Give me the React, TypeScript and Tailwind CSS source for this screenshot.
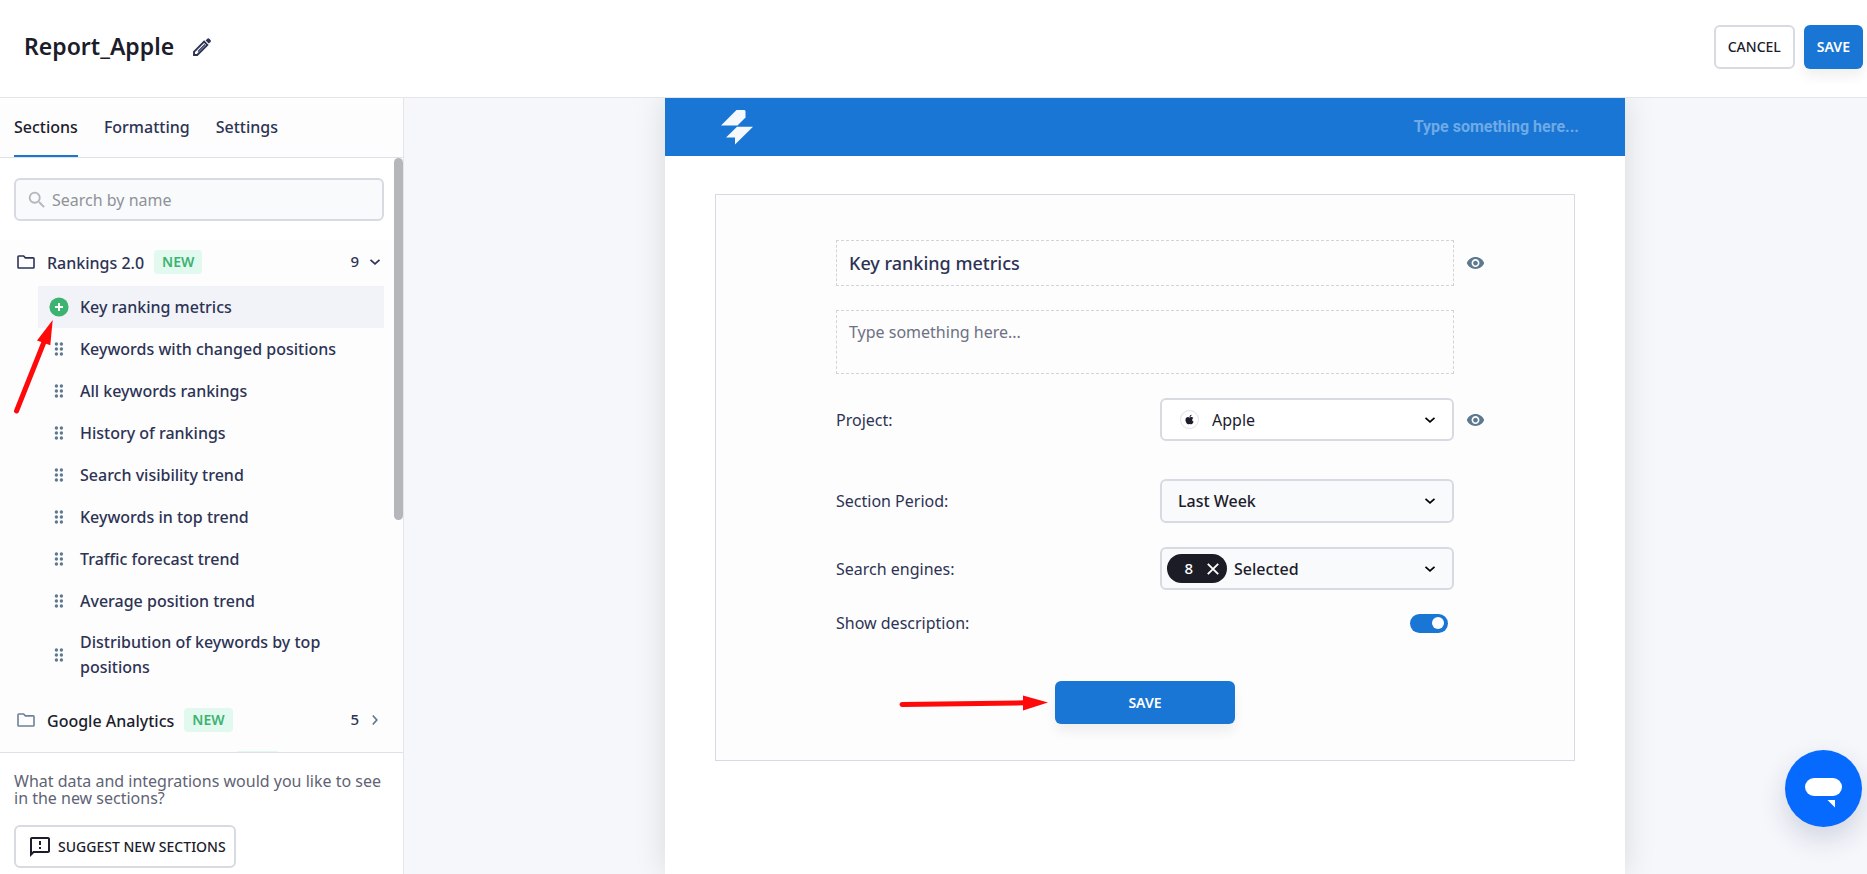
import { useState } from "react";
import type { ReactNode } from "react";
import { MdOutlineFeedback, MdSearch, MdVisibility } from "react-icons/md";
import { FaApple } from "react-icons/fa";

const sections = [
  "Key ranking metrics",
  "Keywords with changed positions",
  "All keywords rankings",
  "History of rankings",
  "Search visibility trend",
  "Keywords in top trend",
  "Traffic forecast trend",
  "Average position trend",
  "Distribution of keywords by top positions",
];

const tabs = ["Sections", "Formatting", "Settings"];

function Chevron({ className = "" }: { className?: string }) {
  return (
    <svg viewBox="0 0 12 12" className={`size-3 ${className}`} fill="none" stroke="currentColor" strokeWidth="1.7" aria-hidden="true">
      <path d="M1.5 3.8 6 7.8 10.5 3.8" />
    </svg>
  );
}

function Pencil() {
  return (
    <svg viewBox="0 0 20 20" className="size-5" aria-hidden="true">
      <path d="M2 18v-3.2L12.1 4.7l3.2 3.2L5.2 18Z" fill="none" stroke="currentColor" strokeWidth="1.9" />
      <path d="M6 14.5 13 7.5" stroke="currentColor" strokeWidth="1.1" />
      <path d="M13.6 3.4 15.3 1.7a1.4 1.4 0 0 1 2 0l1.2 1.2a1.4 1.4 0 0 1 0 2L16.8 6.6Z" fill="currentColor" />
    </svg>
  );
}

function Folder({ className = "" }: { className?: string }) {
  return (
    <svg viewBox="0 0 18 14" className={`h-3.5 w-[18px] ${className}`} fill="none" stroke="currentColor" strokeWidth="1.6" aria-hidden="true">
      <path d="M1.8 1H6.6L8.4 2.9H16.2a.8.8 0 0 1 .8.8V12.2a.8.8 0 0 1-.8.8H1.8a.8.8 0 0 1-.8-.8V1.8A.8.8 0 0 1 1.8 1Z" />
    </svg>
  );
}

function DragDots() {
  return (
    <svg viewBox="0 0 10 14" className="h-3.5 w-2.5" fill="#5d7990" aria-hidden="true">
      {[2, 7, 12].map((y) => (
        <g key={y}>
          <circle cx="2.4" cy={y} r="1.7" />
          <circle cx="7.4" cy={y} r="1.7" />
        </g>
      ))}
    </svg>
  );
}

function AddDot() {
  return (
    <svg viewBox="0 0 20 20" className="size-5" aria-hidden="true">
      <circle cx="10" cy="10" r="9.6" fill="#3cb371" />
      <path d="M10 6v8M6 10h8" stroke="#fff" strokeWidth="1.9" />
    </svg>
  );
}

function NewBadge() {
  return (
    <span className="rounded bg-[#e1f9ee] px-2 text-sm leading-6 font-semibold text-[#3cb371]">NEW</span>
  );
}

function Group({ name, count, open }: { name: string; count: number; open?: boolean }) {
  return (
    <button
      type="button"
      aria-expanded={!!open}
      className="flex h-[43px] w-full items-center pr-[3px] pl-[3px] text-base font-medium"
    >
      <Folder className={open ? "text-[#2d3355]" : "text-[#6b8196]"} />
      <span className={`mr-2.5 ml-3 pt-0.5 ${open ? "text-[#2d3355]" : "text-[#1c1c2e]"}`}>{name}</span>
      <NewBadge />
      <span className="mr-2.5 ml-auto text-[15px] text-[#2d3355]">{count}</span>
      <Chevron className={open ? "text-[#2d3355]" : "-rotate-90 text-[#5d7990]"} />
    </button>
  );
}

function Row({ id, label, children }: { id: string; label: string; children: ReactNode }) {
  return (
    <div className="flex items-center justify-between">
      <label htmlFor={id} className="text-base text-[#2d3355]">
        {label}
      </label>
      {children}
    </div>
  );
}

function EyeButton({ label }: { label: string }) {
  return (
    <button type="button" aria-label={label} className="absolute top-1/2 left-full ml-3 -translate-y-1/2 text-[#5d7990]">
      <MdVisibility className="size-[19px]" />
    </button>
  );
}

const selectClass =
  "w-full appearance-none rounded-md border-2 border-[#d7dae2] text-base text-[#1c1c2b] outline-none";

export default function App() {
  const [activeTab, setActiveTab] = useState("Sections");
  const [title, setTitle] = useState("Key ranking metrics");
  const [showDescription, setShowDescription] = useState(true);

  return (
    <div className="flex h-screen flex-col overflow-hidden bg-[#f6f7fb] font-['Noto_Sans',sans-serif]">
      <header className="relative z-10 flex h-[98px] shrink-0 items-center border-b border-[#e3e5eb] bg-white pr-1 pb-1 pl-6">
        <h1 className="text-[23px] font-semibold text-[#1c1c2b]">Report_Apple</h1>
        <button type="button" aria-label="Rename report" className="ml-[18px] text-[#2d3355]">
          <Pencil />
        </button>
        <div className="ml-auto flex gap-[9px]">
          <button type="button" className="h-11 rounded-md border-2 border-[#d7dae2] bg-white px-3 text-sm font-medium text-[#1c1c2b]">
            CANCEL
          </button>
          <button type="button" className="h-11 rounded-md bg-[#1976d5] px-[13px] text-sm font-semibold text-white shadow-[0_8px_12px_rgba(0,0,0,0.06)]">
            SAVE
          </button>
        </div>
      </header>

      <div className="flex min-h-0 flex-1">
        <aside className="flex w-[404px] shrink-0 flex-col border-r border-[#e3e5eb] bg-[#fdfdfd]">
          <nav className="flex h-[60px] shrink-0 gap-[26px] border-b border-[#dfe1e9] px-3.5">
            {tabs.map((tab) => (
              <button
                key={tab}
                type="button"
                onClick={() => setActiveTab(tab)}
                className={`border-b-2 text-base font-medium ${
                  tab === activeTab ? "border-[#1976d5] text-[#1c1c2b]" : "border-transparent text-[#2d3355]"
                }`}
              >
                {tab}
              </button>
            ))}
          </nav>

          <div className="relative min-h-0 flex-1 overflow-hidden">
            <div className="bg-white pt-5 pr-[19px] pb-[19px] pl-3.5">
              <div className="flex h-[43px] items-center rounded-md border-2 border-[#d7dae2] bg-[#f9fafc] pl-2.5">
                <MdSearch className="size-[22px] text-[#b3b6ba]" />
                <input
                  type="text"
                  aria-label="Search by name"
                  placeholder="Search by name"
                  className="ml-1 min-w-0 flex-1 bg-transparent text-base outline-none placeholder:text-[#8e9299]"
                />
              </div>
            </div>

            <div className="pr-[19px] pl-3.5">
              <Group name="Rankings 2.0" count={9} open />
              <ul className="mt-[3px] mb-2.5 ml-6">
                {sections.map((name, i) => (
                  <li
                    key={name}
                    className={`relative flex min-h-[42px] items-center py-2 pr-4 text-base leading-[25px] font-medium text-[#2d3355] ${
                      i === 0 ? "bg-[#f2f3f9]" : ""
                    }`}
                  >
                    <span className="flex w-[42px] shrink-0 justify-center">{i === 0 ? <AddDot /> : <DragDots />}</span>
                    {name}
                    {i === 0 && (
                      <svg viewBox="0 0 40 96" className="absolute top-8 -left-6 z-10 h-24 w-10" aria-hidden="true">
                        <path d="M2.5 93 30 24" stroke="#ff0a0a" strokeWidth="5" strokeLinecap="round" />
                        <path d="M38.7 2 23 22.5 36.3 27.3Z" fill="#ff0a0a" />
                      </svg>
                    )}
                  </li>
                ))}
              </ul>
              <Group name="Google Analytics" count={5} />
              <div className="pt-2.5 pl-[221px]">
                <div className="h-6 w-[45px] rounded bg-[#e1f9ee]" />
              </div>
            </div>

            <div className="absolute top-0 right-0 h-[61%] w-[9px] rounded-full bg-[#b5b6ba]" />
          </div>

          <div className="shrink-0 border-t border-[#dfe1e9] bg-white px-3.5 pt-5 pb-1.5">
            <p className="text-base leading-[17px] text-[#5f6375]">
              What data and integrations would you like to see in the new sections?
            </p>
            <button
              type="button"
              className="mt-[18px] flex h-[43px] items-center gap-1.5 rounded-md border-2 border-[#d7dae2] bg-white pr-2 pl-3 text-sm font-medium text-[#1c1c2b]"
            >
              <MdOutlineFeedback className="size-6" />
              SUGGEST NEW SECTIONS
            </button>
          </div>
        </aside>

        <main className="flex min-w-0 flex-1 justify-center pl-[19px]">
          <div className="w-full max-w-[960px] bg-white shadow-[0_0_30px_rgba(0,0,0,0.12)]">
            <div className="flex h-[58px] items-center justify-between bg-[#1976d5] pr-[46px] pl-14">
              <svg viewBox="0 0 32 35" className="h-[35px] w-8" fill="#f5f8fd" aria-hidden="true">
                <path d="M15.5 0H23.5L24.5 1V7.5L16.5 15.5H0Z" />
                <path d="M16 16.8H32L14 34.5V27.5H5Z" />
              </svg>
              <input
                type="text"
                aria-label="Header text"
                placeholder="Type something here..."
                className="w-60 bg-transparent text-right font-[Roboto,sans-serif] text-base font-bold outline-none placeholder:text-[#6faae6]"
              />
            </div>

            <section className="mx-[50px] mt-[38px] border border-[#d7dae2] bg-[#fdfdfd] px-[120px] pt-[45px] pb-9">
              <div className="relative">
                <input
                  type="text"
                  aria-label="Section title"
                  value={title}
                  onChange={(e) => setTitle(e.target.value)}
                  className="block h-[46px] w-full border border-dashed border-[#d3d4d7] bg-transparent px-3 text-lg font-medium text-[#2d3355] outline-none"
                />
                <EyeButton label="Toggle title" />
              </div>
              <textarea
                aria-label="Section description"
                placeholder="Type something here..."
                className="mt-6 block h-16 w-full resize-none border border-dashed border-[#d3d4d7] bg-transparent px-3 py-[9px] text-base outline-none placeholder:text-[#6d7183]"
              />

              <div className="relative mt-6">
                <Row id="project" label="Project:">
                  <div className="relative w-[294px]">
                    <select id="project" className={`${selectClass} h-[43px] bg-white pl-[50px]`}>
                      <option>Apple</option>
                    </select>
                    <span className="pointer-events-none absolute top-3 left-5 flex size-[19px] items-center justify-center rounded-full border border-[#dfe1e9] text-[#1c1c2b]">
                      <FaApple className="size-[11px]" />
                    </span>
                    <Chevron className="pointer-events-none absolute top-4 right-[18px]" />
                  </div>
                </Row>
                <EyeButton label="Toggle project" />
              </div>

              <div className="mt-[38px]">
                <Row id="period" label="Section Period:">
                  <div className="relative w-[294px]">
                    <select id="period" className={`${selectClass} h-11 bg-[#f9fafc] pl-4 font-medium`}>
                      <option>Last Week</option>
                    </select>
                    <Chevron className="pointer-events-none absolute top-4 right-[18px]" />
                  </div>
                </Row>
              </div>

              <div className="mt-6">
                <Row id="engines" label="Search engines:">
                  <div className="relative w-[294px]">
                    <select id="engines" className={`${selectClass} h-[43px] bg-[#f9fafc] pl-[72px] font-medium`}>
                      <option>Selected</option>
                    </select>
                    <button
                      type="button"
                      aria-label="Clear 8 selected"
                      className="absolute top-[7px] left-[7px] flex h-[29px] w-[60px] items-center justify-end gap-3.5 rounded-full bg-[#1c1c26] pr-2 text-[15px] font-medium text-white"
                    >
                      8
                      <svg viewBox="0 0 12 12" className="size-3" stroke="currentColor" strokeWidth="1.9" aria-hidden="true">
                        <path d="M.8.8 11.2 11.2M11.2.8.8 11.2" />
                      </svg>
                    </button>
                    <Chevron className="pointer-events-none absolute top-4 right-[18px]" />
                  </div>
                </Row>
              </div>

              <div className="mt-[21px] pr-1.5">
                <Row id="description" label="Show description:">
                  <input
                    id="description"
                    type="checkbox"
                    checked={showDescription}
                    onChange={(e) => setShowDescription(e.target.checked)}
                    className="flex h-[19px] w-[38px] appearance-none items-center rounded-full bg-[#b5b6ba] px-1 before:size-3 before:rounded-full before:bg-white checked:justify-end checked:bg-[#1976d5]"
                  />
                </Row>
              </div>

              <div className="relative mx-auto mt-[46px] w-[180px]">
                <button
                  type="button"
                  className="h-[43px] w-full rounded-md bg-[#1976d5] text-sm font-semibold text-white shadow-[0_8px_12px_rgba(0,0,0,0.06)]"
                >
                  SAVE
                </button>
                <svg viewBox="0 0 150 16" className="absolute top-3.5 right-full mr-[7px] h-4 w-[150px]" aria-hidden="true">
                  <path d="M4 9.5 126 7.8" stroke="#ff0a0a" strokeWidth="5" strokeLinecap="round" />
                  <path d="M125 .5 150 7.5 125 15.5Z" fill="#ff0a0a" />
                </svg>
              </div>
            </section>
          </div>
        </main>
      </div>

      <button
        type="button"
        aria-label="Open chat"
        className="fixed right-[5px] bottom-[47px] flex size-[77px] items-center justify-center rounded-full bg-[#066aff] shadow-[0_12px_28px_rgba(20,30,80,0.16)]"
      >
        <svg viewBox="0 0 77 77" className="size-full" fill="#fff" aria-hidden="true">
          <rect x="20" y="28" width="37" height="18" rx="9" />
          <path d="M42.5 50H50V57.5Z" />
        </svg>
      </button>
    </div>
  );
}
